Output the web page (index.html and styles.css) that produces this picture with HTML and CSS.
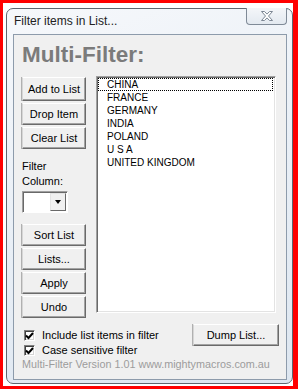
FILE: index.html
```html
<!DOCTYPE html>
<html lang="en">
<head>
    <meta charset="UTF-8">
    <meta name="viewport" content="width=device-width, initial-scale=1.0">
    <title>Multi-Filter</title>
    <link rel="stylesheet" href="styles.css">
</head>
<body>
    <div class="screen">
        <div class="window">
            <div class="titlebar">
                <span class="title">Filter items in List...</span>
                <div class="close">
                    <svg width="14" height="10" viewBox="0 0 14 10">
                        <path d="M1.5 0.5h3l2.5 2.6 2.5-2.6h3l-4 4.5 4 4.5h-3l-2.5-2.6-2.5 2.6h-3l4-4.5z" fill="#fff" stroke="#7d8794" stroke-width="1"/>
                    </svg>
                </div>
            </div>
            <div class="client">
                <h1 class="heading">Multi-Filter:</h1>
                <div class="main">
                    <div class="side">
                        <button class="btn btn-tall">Add to List</button>
                        <button class="btn">Drop Item</button>
                        <button class="btn">Clear List</button>
                        <div class="label">Filter<br>Column:</div>
                        <div class="combo">
                            <span class="combo-field"></span>
                            <span class="combo-arrow"><i></i></span>
                        </div>
                        <div class="btn-group">
                            <button class="btn">Sort List</button>
                            <button class="btn">Lists...</button>
                            <button class="btn">Apply</button>
                            <button class="btn">Undo</button>
                        </div>
                    </div>
                    <ul class="listbox">
                        <li class="focused">CHINA</li>
                        <li>FRANCE</li>
                        <li>GERMANY</li>
                        <li>INDIA</li>
                        <li>POLAND</li>
                        <li>U S A</li>
                        <li>UNITED KINGDOM</li>
                    </ul>
                </div>
                <div class="bottom">
                    <div class="checks">
                        <label class="check"><span class="box"><svg width="9" height="8" viewBox="0 0 9 8"><path d="M1 3.5l2.5 2.5 4.5-5" fill="none" stroke="#000" stroke-width="2"/></svg></span>Include list items in filter</label>
                        <label class="check"><span class="box"><svg width="9" height="8" viewBox="0 0 9 8"><path d="M1 3.5l2.5 2.5 4.5-5" fill="none" stroke="#000" stroke-width="2"/></svg></span>Case sensitive filter</label>
                    </div>
                    <button class="btn btn-dump">Dump List...</button>
                </div>
                <div class="footer">Multi-Filter Version 1.01 www.mightymacros.com.au</div>
            </div>
        </div>
    </div>
</body>
</html>
```

FILE: styles.css
```css
* {
    margin: 0;
    padding: 0;
    box-sizing: border-box;
    font-family: "Liberation Sans", Arial, sans-serif;
}

body {
    background: #fff;
}

.screen {
    width: 298px;
    height: 389px;
    border: 3px solid #f00;
    border-right-width: 5px;
    background: #fff;
    padding: 5px 0 0 3px;
}

.window {
    width: 287px;
    height: 376px;
    border: 1px solid #5f6670;
    border-radius: 7px;
    background: linear-gradient(160deg, #f6f8fb 0%, #e9eff6 50%, #dde6f0 100%);
    padding: 0 5px 3px 6px;
    display: flex;
    flex-direction: column;
}

.titlebar {
    height: 25px;
    display: flex;
    justify-content: space-between;
    align-items: flex-start;
}

.title {
    font-size: 12px;
    line-height: 25px;
    color: #222;
    padding-left: 1px;
}

.close {
    width: 41px;
    height: 17px;
    margin-top: -1px;
    border: 1px solid #7f8a97;
    border-top: none;
    border-radius: 0 0 4px 4px;
    background: linear-gradient(#f4f6f9, #e3e9f0);
    display: flex;
    align-items: center;
    justify-content: center;
}

.close svg {
    display: block;
}

.client {
    flex: 1;
    border: 1px solid #8d9bab;
    background: #f0f0f0;
    padding: 0 7px 0 8px;
    display: flex;
    flex-direction: column;
}

.heading {
    margin-top: 7px;
    font-size: 22.5px;
    line-height: 26px;
    font-weight: bold;
    color: #7b7b7b;
}

.main {
    margin-top: 8px;
    display: flex;
    gap: 10px;
}

.side {
    width: 64px;
    padding-top: 1px;
    display: flex;
    flex-direction: column;
    gap: 2px;
}

.btn {
    display: block;
    width: 64px;
    height: 22px;
    font-size: 11px;
    color: #000;
    background: #f0f0f0;
    border: 1px solid;
    border-color: #fff #6a6a6a #6a6a6a #d6d6d6;
    box-shadow: inset -1px -1px 0 #a3a3a3, -1px 0 0 #b0b0b0;
    cursor: pointer;
}

.btn-tall {
    height: 24px;
}

.label {
    margin-top: 8px;
    font-size: 11px;
    line-height: 15px;
    color: #000;
}

.combo {
    width: 46px;
    height: 22px;
    display: flex;
    background: #fff;
    border: 1px solid;
    border-color: #a0a0a0 #fff #fff #a0a0a0;
    box-shadow: inset 1px 1px 0 #696969;
    padding: 1px;
}

.combo-field {
    flex: 1;
}

.combo-arrow {
    width: 16px;
    background: #f0f0f0;
    border: 1px solid;
    border-color: #e3e3e3 #696969 #696969 #e3e3e3;
    display: flex;
    align-items: center;
    justify-content: center;
}

.combo-arrow i {
    width: 0;
    height: 0;
    border-left: 3.5px solid transparent;
    border-right: 3.5px solid transparent;
    border-top: 4px solid #000;
}

.btn-group {
    margin-top: 9px;
    display: flex;
    flex-direction: column;
    gap: 2px;
}

.listbox {
    list-style: none;
    width: 180px;
    height: 237px;
    background: #fff;
    border: 1px solid;
    border-color: #a0a0a0 #fff #fff #a0a0a0;
    box-shadow: inset 1px 1px 0 #696969, inset -1px -1px 0 #e3e3e3;
    padding: 1px 2px 0 1px;
}

.listbox li {
    font-size: 10px;
    line-height: 13px;
    padding-left: 9px;
    color: #000;
}

.listbox .focused {
    outline: 1px dotted #000;
    outline-offset: -1px;
}

.bottom {
    margin-top: 6px;
    display: flex;
    justify-content: space-between;
    align-items: flex-start;
}

.checks {
    padding-top: 4px;
    padding-left: 2px;
}

.check {
    display: flex;
    align-items: center;
    gap: 7px;
    font-size: 11px;
    line-height: 15px;
    color: #000;
}

.box {
    width: 11px;
    height: 11px;
    background: #fff;
    border: 1px solid;
    border-color: #808080 #fff #fff #808080;
    box-shadow: inset 1px 1px 0 #404040, inset -1px -1px 0 #d4d4d4;
    display: flex;
    align-items: center;
    justify-content: center;
}

.box svg {
    display: block;
}

.btn-dump {
    width: 86px;
}

.footer {
    margin-top: -1px;
    font-size: 10.8px;
    line-height: 14px;
    color: #9c9c9c;
}
```
